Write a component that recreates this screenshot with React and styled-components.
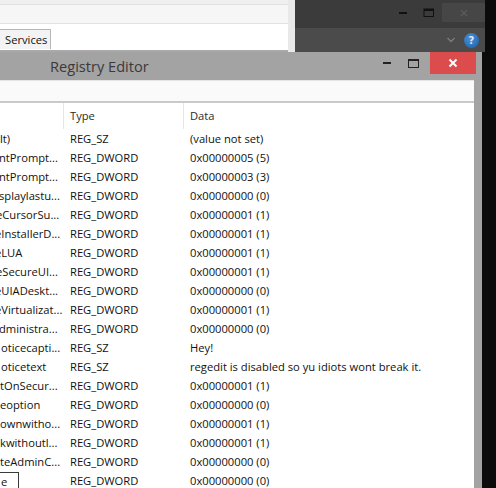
import React from "react";
import styled, { createGlobalStyle } from "styled-components";

const GlobalStyle = createGlobalStyle`
  html, body { margin: 0; padding: 0; background: #0b0b0b; }
  body { font-family: "Open Sans", "Noto Sans", sans-serif; }
`;

const Screen = styled.div`
  width: 496px;
  height: 488px;
  overflow: hidden;
  background: #0b0b0b;
  display: flex;
  flex-direction: column;
`;

const TopArea = styled.div`
  height: 52px;
  display: flex;
  flex-shrink: 0;
`;

const ServicesWindow = styled.div`
  width: 288px;
  background: #efefef;
  border-right: 7px solid #e9e9e9;
  display: flex;
  flex-direction: column;
  padding-top: 4px;
`;

const ToolStrip = styled.div`
  height: 18px;
  background: #f6f6f6;
  border-top: 1px solid #e2e2e2;
  border-bottom: 1px solid #e2e2e2;
`;

const TabRow = styled.div`
  flex: 1;
  background: #ffffff;
  border-bottom: 2px solid #a9a9a9;
  display: flex;
  align-items: flex-end;
  padding-bottom: 1px;
`;

const Tab = styled.div`
  height: 19px;
  padding: 0 3px 0 5px;
  background: #f3f3f3;
  border: 1px solid #b8b8b8;
  border-bottom: none;
  border-left: none;
  font-size: 11.2px;
  line-height: 19px;
  color: #111;
`;

const DarkWindow = styled.div`
  width: 190px;
  background: #3b3b3b;
  display: flex;
  flex-direction: column;
`;

const DarkTitle = styled.div`
  height: 28px;
  display: flex;
  justify-content: flex-end;
  align-items: flex-start;
  padding-top: 3px;
  box-sizing: border-box;
`;

const DarkCtl = styled.div`
  width: 26px;
  height: 19px;
  display: flex;
  align-items: center;
  justify-content: center;
`;

const DarkClose = styled(DarkCtl)`
  width: 43px;
  background: #464646;
`;

const Ribbon = styled.div`
  flex: 1;
  background: #4b4b4b;
  display: flex;
  align-items: center;
  justify-content: flex-end;
  gap: 8px;
  padding-right: 6px;
`;

const HelpDot = styled.div`
  width: 15px;
  height: 15px;
  border-radius: 50%;
  background: radial-gradient(circle at 40% 35%, #4a8fd6, #1b5fa8);
  color: #dfe9f5;
  font-family: "DejaVu Sans", sans-serif;
  font-weight: bold;
  font-size: 10px;
  line-height: 15px;
  text-align: center;
`;

const RegWindow = styled.div`
  width: 474px;
  flex: 1;
  background: #a3a3a3;
  border-right: 8px solid #a3a3a3;
  display: flex;
  flex-direction: column;
  min-height: 0;
`;

const TitleBar = styled.div`
  height: 28px;
  flex-shrink: 0;
  display: flex;
  align-items: flex-start;
  justify-content: space-between;
`;

const Title = styled.div`
  padding-left: 50px;
  font-size: 14.6px;
  line-height: 29px;
  color: #3a3a3a;
`;

const Controls = styled.div`
  display: flex;
  align-items: flex-start;
  margin-right: -2px;
`;

const Ctl = styled.div`
  width: 27px;
  height: 22px;
  display: flex;
  align-items: center;
  justify-content: center;
`;

const CloseBtn = styled(Ctl)`
  width: 46px;
  margin-left: 3px;
  background: #dd4c4c;
`;

const Client = styled.div`
  flex: 1;
  background: #ffffff;
  display: flex;
  flex-direction: column;
  min-height: 0;
`;

const MenuStrip = styled.div`
  height: 20px;
  flex-shrink: 0;
  background: #fafafa;
  border-top: 1px solid #e4e4e4;
  border-bottom: 2px solid #c9c9c9;
`;

const ListView = styled.div`
  flex: 1;
  display: flex;
  flex-direction: column;
  overflow: hidden;
  font-size: 11.2px;
  color: #111;
`;

const Row = styled.div`
  display: grid;
  grid-template-columns: 64px 120px 1fr;
  height: ${(p) => (p.$header ? 26 : 19)}px;
  line-height: ${(p) => (p.$header ? 26 : 19)}px;
  flex-shrink: 0;
`;

const HeadCell = styled.div`
  padding-left: 6px;
  color: #2b2b2b;
  border-right: 1px solid #e6e6e6;
  &:last-child { border-right: none; }
`;

const NameCell = styled.div`
  overflow: hidden;
  white-space: nowrap;
  text-indent: ${(p) => p.$shift || 0}px;
  position: relative;
`;

const Cell = styled.div`
  padding-left: 6px;
  white-space: nowrap;
  overflow: hidden;
`;

const EditBox = styled.div`
  position: absolute;
  left: -1px;
  top: 1px;
  width: 20px;
  height: 22px;
  border: 1px solid #3a3a3a;
  box-sizing: border-box;
  text-indent: 1px;
  line-height: 17px;
  background: #fff;
`;

const rows = [
  ["lt)", 0, "REG_SZ", "(value not set)"],
  ["ntPrompt...", -1, "REG_DWORD", "0x00000005 (5)"],
  ["ntPrompt...", -1, "REG_DWORD", "0x00000003 (3)"],
  ["splaylastu...", -1, "REG_DWORD", "0x00000000 (0)"],
  ["eCursorSu...", -4, "REG_DWORD", "0x00000001 (1)"],
  ["eInstallerD...", -5, "REG_DWORD", "0x00000001 (1)"],
  ["eLUA", -5, "REG_DWORD", "0x00000001 (1)"],
  ["eSecureUI...", -4, "REG_DWORD", "0x00000001 (1)"],
  ["eUIADeskt...", -5, "REG_DWORD", "0x00000000 (0)"],
  ["eVirtualizat...", -5, "REG_DWORD", "0x00000001 (1)"],
  ["dministra...", -1, "REG_DWORD", "0x00000000 (0)"],
  ["oticecapti...", 1, "REG_SZ", "Hey!"],
  ["oticetext", 1, "REG_SZ", "regedit is disabled so yu idiots wont break it."],
  ["tOnSecur...", 0, "REG_DWORD", "0x00000001 (1)"],
  ["eoption", 0, "REG_DWORD", "0x00000000 (0)"],
  ["ownwitho...", 0, "REG_DWORD", "0x00000001 (1)"],
  ["kwithoutl...", 0, "REG_DWORD", "0x00000001 (1)"],
  ["teAdminC...", 0, "REG_DWORD", "0x00000000 (0)"],
  [null, 0, "REG_DWORD", "0x00000000 (0)"],
];

export default function App() {
  return (
    <>
      <GlobalStyle />
      <Screen>
        <TopArea>
          <ServicesWindow>
            <ToolStrip />
            <TabRow>
              <Tab>Services</Tab>
            </TabRow>
          </ServicesWindow>
          <DarkWindow>
            <DarkTitle>
              <DarkCtl>
                <svg width="10" height="4" viewBox="0 0 10 4">
                  <rect x="1" y="1" width="8" height="2" fill="#111" />
                </svg>
              </DarkCtl>
              <DarkCtl>
                <svg width="12" height="10" viewBox="0 0 12 10">
                  <rect x="1" y="1" width="9.5" height="7.5" fill="none" stroke="#111" strokeWidth="1" />
                  <rect x="1" y="1" width="9.5" height="2" fill="#111" />
                </svg>
              </DarkCtl>
              <DarkClose>
                <svg width="10" height="10" viewBox="0 0 10 10">
                  <path d="M2 2 L8 8 M8 2 L2 8" stroke="#5a5a5a" strokeWidth="1.4" />
                </svg>
              </DarkClose>
            </DarkTitle>
            <Ribbon>
              <svg width="10" height="8" viewBox="0 0 10 8">
                <path d="M1.5 2 L5 5.5 L8.5 2" stroke="#7c7c7c" strokeWidth="1.4" fill="none" />
              </svg>
              <HelpDot>?</HelpDot>
            </Ribbon>
          </DarkWindow>
        </TopArea>
        <RegWindow>
          <TitleBar>
            <Title>Registry Editor</Title>
            <Controls>
              <Ctl>
                <svg width="10" height="4" viewBox="0 0 10 4">
                  <rect x="1" y="1" width="8" height="2" fill="#222" />
                </svg>
              </Ctl>
              <Ctl>
                <svg width="13" height="11" viewBox="0 0 13 11">
                  <rect x="1.5" y="1.5" width="10" height="8" fill="none" stroke="#222" strokeWidth="1" />
                  <rect x="1.5" y="1.5" width="10" height="1.5" fill="#222" />
                </svg>
              </Ctl>
              <CloseBtn>
                <svg width="12" height="12" viewBox="0 0 12 12">
                  <path d="M2.5 2.5 L9.5 9.5 M9.5 2.5 L2.5 9.5" stroke="#ffffff" strokeWidth="2" />
                </svg>
              </CloseBtn>
            </Controls>
          </TitleBar>
          <Client>
            <MenuStrip />
            <ListView>
              <Row $header>
                <HeadCell />
                <HeadCell>Type</HeadCell>
                <HeadCell>Data</HeadCell>
              </Row>
              {rows.map(([name, shift, type, data], i) => (
                <Row key={i}>
                  <NameCell $shift={shift}>
                    {name === null ? <EditBox>e</EditBox> : name}
                  </NameCell>
                  <Cell>{type}</Cell>
                  <Cell>{data}</Cell>
                </Row>
              ))}
            </ListView>
          </Client>
        </RegWindow>
      </Screen>
    </>
  );
}
